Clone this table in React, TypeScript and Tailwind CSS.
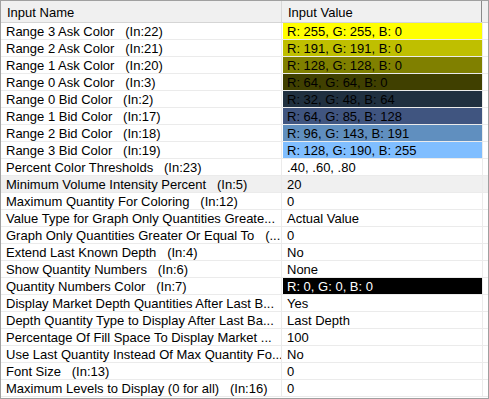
import React from "react";

type Row = {
  name: string;
  value: string;
  swatch?: string;
  light?: boolean;
  selected?: boolean;
};

const rows: Row[] = [
  { name: "Range 3 Ask Color   (In:22)", value: "R: 255, G: 255, B: 0", swatch: "#ffff00" },
  { name: "Range 2 Ask Color   (In:21)", value: "R: 191, G: 191, B: 0", swatch: "#bfbf00" },
  { name: "Range 1 Ask Color   (In:20)", value: "R: 128, G: 128, B: 0", swatch: "#808000" },
  { name: "Range 0 Ask Color   (In:3)", value: "R: 64, G: 64, B: 0", swatch: "#404000" },
  { name: "Range 0 Bid Color   (In:2)", value: "R: 32, G: 48, B: 64", swatch: "#203040" },
  { name: "Range 1 Bid Color   (In:17)", value: "R: 64, G: 85, B: 128", swatch: "#405580" },
  { name: "Range 2 Bid Color   (In:18)", value: "R: 96, G: 143, B: 191", swatch: "#608fbf" },
  { name: "Range 3 Bid Color   (In:19)", value: "R: 128, G: 190, B: 255", swatch: "#80beff" },
  { name: "Percent Color Thresholds   (In:23)", value: ".40, .60, .80" },
  { name: "Minimum Volume Intensity Percent   (In:5)", value: "20", selected: true },
  { name: "Maximum Quantity For Coloring   (In:12)", value: "0" },
  { name: "Value Type for Graph Only Quantities Greate...", value: "Actual Value" },
  { name: "Graph Only Quantities Greater Or Equal To   (...", value: "0" },
  { name: "Extend Last Known Depth   (In:4)", value: "No" },
  { name: "Show Quantity Numbers   (In:6)", value: "None" },
  { name: "Quantity Numbers Color   (In:7)", value: "R: 0, G: 0, B: 0", swatch: "#000000", light: true },
  { name: "Display Market Depth Quantities After Last B...", value: "Yes" },
  { name: "Depth Quantity Type to Display After Last Ba...", value: "Last Depth" },
  { name: "Percentage Of Fill Space To Display Market ...", value: "100" },
  { name: "Use Last Quantity Instead Of Max Quantity Fo...", value: "No" },
  { name: "Font Size   (In:13)", value: "0" },
  { name: "Maximum Levels to Display (0 for all)   (In:16)", value: "0" },
];

export default function App() {
  return (
    <div
      className="w-[489px] h-[399px] overflow-hidden border border-[#a0a0a0] bg-white text-[13px] text-black"
      style={{ fontFamily: '"Liberation Sans", Arial, sans-serif' }}
    >
      {/* column headers */}
      <div className="flex h-[22px] bg-[#f0f0f0] border-b border-[#d5d5d5]">
        <div className="w-[281px] shrink-0 border-r border-[#d8d8d8] pl-[6px] leading-[23px] whitespace-pre overflow-hidden">
          Input Name
        </div>
        <div className="w-[200px] shrink-0 border-r border-[#8a8a8a] pl-[6px] leading-[23px] whitespace-pre overflow-hidden">
          Input Value
        </div>
        <div className="flex-1" />
      </div>

      {/* property rows */}
      {rows.map((r) => (
        <div
          key={r.name}
          className={`flex h-[17px] border-b border-[#ebebeb] ${r.selected ? "bg-[#f0f0f0]" : ""}`}
        >
          <div className="w-[281px] shrink-0 border-r border-[#ebebeb] pl-[5px] leading-[18px] whitespace-pre overflow-hidden">
            {r.name}
          </div>
          <div className="w-[201px] shrink-0 border-r border-[#ebebeb] overflow-hidden">
            {r.swatch ? (
              <div
                className={`ml-[1px] h-[16px] pl-[4px] leading-[18px] whitespace-pre overflow-hidden ${r.light ? "text-white" : "text-black"}`}
                style={{ backgroundColor: r.swatch }}
              >
                {r.value}
              </div>
            ) : (
              <div className="pl-[5px] leading-[18px] whitespace-pre">{r.value}</div>
            )}
          </div>
          <div className="flex-1" />
        </div>
      ))}
    </div>
  );
}
